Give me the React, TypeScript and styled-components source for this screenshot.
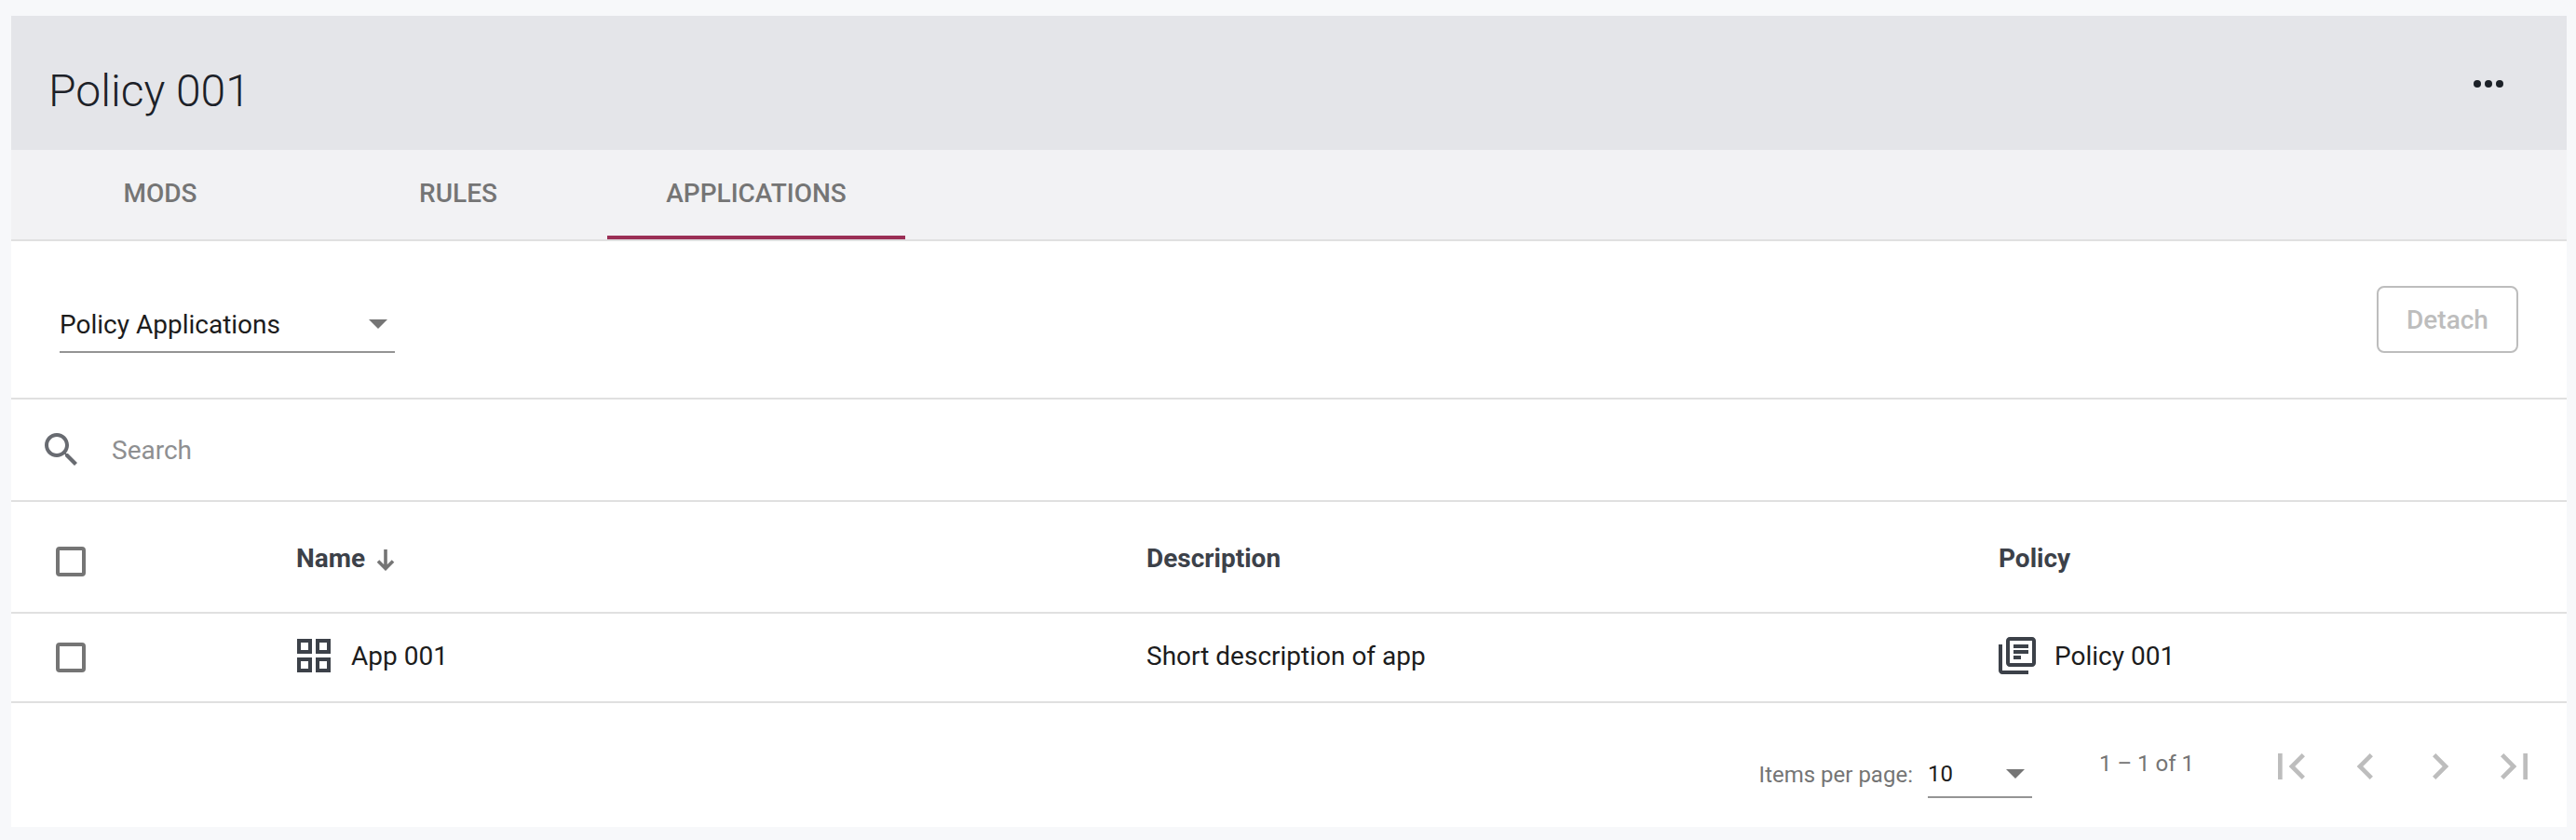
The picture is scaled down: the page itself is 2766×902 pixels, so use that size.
import { createGlobalStyle } from 'styled-components';
import styled from 'styled-components';

const GlobalStyle = createGlobalStyle`
  html, body {
    margin: 0;
    padding: 0;
    background: #f7f8fa;
    font-family: Roboto, "Liberation Sans", sans-serif;
  }
  * {
    box-sizing: border-box;
  }
`;

const Page = styled.div`
  padding: 17px 10px 14px 12px;
`;
const Panel = styled.main`
  background: #fff;
`;
const Header = styled.header`
  height: 144px;
  background: #e4e5e9;
  display: flex;
  align-items: center;
  justify-content: space-between;
  padding: 0 68px 0 40px;
`;
const Title = styled.h1`
  margin: 16px 0 0;
  font-size: 48px;
  font-weight: 300;
  color: #1c2128;
`;
const Dots = styled.div`
  display: flex;
  gap: 4px;
  margin-top: 2px;
  span {
    width: 8px;
    height: 8px;
    border-radius: 50%;
    background: #1c2128;
  }
`;
const Tabs = styled.nav`
  height: 98px;
  display: flex;
  background: #f2f2f4;
  border-bottom: 2px solid #e0e0e0;
`;
const Tab = styled.div<{ $active?: boolean }>`
  width: 320px;
  height: 96px;
  display: flex;
  align-items: center;
  justify-content: center;
  font-size: 28px;
  font-weight: 500;
  color: #757575;
  border-bottom: 4px solid ${(p) => (p.$active ? '#9b2f56' : 'transparent')};
`;
const Toolbar = styled.div`
  height: 170px;
  display: flex;
  justify-content: space-between;
  align-items: flex-start;
  padding: 48px 52px 0 52px;
  border-bottom: 2px solid #e0e0e0;
`;
const Select = styled.div<{ $width: number; $size: number; $height: number }>`
  width: ${(p) => p.$width}px;
  height: ${(p) => p.$height}px;
  display: flex;
  align-items: center;
  justify-content: space-between;
  padding-right: 8px;
  border-bottom: 2px solid #949494;
  font-size: ${(p) => p.$size}px;
  color: #1c1c1c;
`;
const PolicySelect = styled(Select)`
  margin-top: 12px;
`;
const Caret = styled.span`
  width: 0;
  height: 0;
  border-left: 10px solid transparent;
  border-right: 10px solid transparent;
  border-top: 10px solid #757575;
`;
const DetachButton = styled.button`
  width: 152px;
  height: 72px;
  background: #fff;
  border: 2px solid #bdbdbd;
  border-radius: 8px;
  font-family: inherit;
  font-size: 28px;
  font-weight: 500;
  color: #bdbdbd;
`;
const SearchRow = styled.div`
  height: 110px;
  display: flex;
  align-items: center;
  gap: 30px;
  padding-left: 30px;
  border-bottom: 2px solid #e0e0e0;
  font-size: 28px;
  color: #8e8f91;
`;
const TableRow = styled.div<{ $height: number }>`
  height: ${(p) => p.$height}px;
  display: grid;
  grid-template-columns: 306px 913px 915px 1fr;
  align-items: center;
  border-bottom: 2px solid #e0e0e0;
`;
const CheckCell = styled.div<{ $offset?: number }>`
  padding-left: 48px;
  margin-top: ${(p) => p.$offset ?? 0}px;
  display: flex;
`;
const Checkbox = styled.span`
  width: 32px;
  height: 32px;
  border: 4px solid #757575;
  border-radius: 4px;
`;
const HeadCell = styled.div`
  display: flex;
  align-items: center;
  gap: 12px;
  padding-top: 2px;
  font-size: 28px;
  font-weight: 700;
  color: #3c4149;
`;
const SortArrow = styled.svg`
  display: block;
  margin-top: 4px;
`;
const Cell = styled.div`
  display: flex;
  align-items: center;
  gap: 16px;
  padding-bottom: 4px;
  font-size: 28px;
  color: #1c1c1c;
`;
const CellIcon = styled.span<{ $shift: number }>`
  display: flex;
  margin-left: -${(p) => p.$shift}px;
`;
const Footer = styled.footer`
  height: 133px;
  display: flex;
  align-items: center;
  justify-content: flex-end;
  padding-right: 28px;
`;
const PageLabel = styled.span`
  font-size: 24px;
  color: #757575;
  margin-right: 16px;
`;
const PerPage = styled.div`
  margin-top: 20px;
  display: flex;
  align-items: center;
`;
const Range = styled.span`
  font-size: 24px;
  color: #757575;
  margin: 0 76px 3px 72px;
`;
const Pager = styled.div`
  display: flex;
  gap: 24px;
  margin-top: 3px;
  svg {
    display: block;
  }
`;

const Icon = ({ d, size, color }: { d: string; size: number; color: string }) => (
  <svg width={size} height={size} viewBox="0 0 24 24" fill={color}>
    <path d={d} />
  </svg>
);

const SEARCH =
  'M15.5 14h-.79l-.28-.27C15.41 12.59 16 11.11 16 9.5 16 5.91 13.09 3 9.5 3S3 5.91 3 9.5 5.91 16 9.5 16c1.61 0 3.09-.59 4.23-1.57l.27.28v.79l5 4.99L20.49 19l-4.99-5zm-6 0C7.01 14 5 11.99 5 9.5S7.01 5 9.5 5 14 7.01 14 9.5 11.99 14 9.5 14z';
const APP_GRID =
  'M3 3h8v8H3V3zm2 2v4h4V5H5zm8-2h8v8h-8V3zm2 2v4h4V5h-4zM3 13h8v8H3v-8zm2 2v4h4v-4H5zm8-2h8v8h-8v-8zm2 2v4h4v-4h-4z';
const LIBRARY =
  'M4 6H2v14c0 1.1.9 2 2 2h14v-2H4V6zm16-4H8c-1.1 0-2 .9-2 2v12c0 1.1.9 2 2 2h12c1.1 0 2-.9 2-2V4c0-1.1-.9-2-2-2zm0 14H8V4h12v12zM10 9h8v2h-8zm0 3h4v2h-4zm0-6h8v2h-8z';
const FIRST = 'M18.41 16.59L13.82 12l4.59-4.59L17 6l-6 6 6 6zM6 6h2v12H6z';
const PREV = 'M15.41 7.41L14 6l-6 6 6 6 1.41-1.41L10.83 12z';
const NEXT = 'M8.59 16.59L10 18l6-6-6-6-1.41 1.41L13.17 12z';
const LAST = 'M5.59 7.41L10.18 12l-4.59 4.59L7 18l6-6-6-6zM16 6h2v12h-2z';

export default function App() {
  return (
    <Page>
      <GlobalStyle />
      <Panel>
        <Header>
          <Title>Policy 001</Title>
          <Dots>
            <span />
            <span />
            <span />
          </Dots>
        </Header>
        <Tabs>
          <Tab>MODS</Tab>
          <Tab>RULES</Tab>
          <Tab $active>APPLICATIONS</Tab>
        </Tabs>
        <Toolbar>
          <PolicySelect $width={360} $size={28} $height={60}>
            Policy Applications
            <Caret />
          </PolicySelect>
          <DetachButton>Detach</DetachButton>
        </Toolbar>
        <SearchRow>
          <Icon d={SEARCH} size={48} color="#686b71" />
          Search
        </SearchRow>
        <TableRow $height={120}>
          <CheckCell $offset={10}>
            <Checkbox />
          </CheckCell>
          <HeadCell>
            Name
            <SortArrow width="20" height="23" viewBox="0 0 20 23" fill="none" stroke="#757575" strokeWidth="3.6">
              <path d="M10 0v20M2 12.5l8 8 8-8" />
            </SortArrow>
          </HeadCell>
          <HeadCell>Description</HeadCell>
          <HeadCell>Policy</HeadCell>
        </TableRow>
        <TableRow $height={96}>
          <CheckCell>
            <Checkbox />
          </CheckCell>
          <Cell>
            <CellIcon $shift={5}>
              <Icon d={APP_GRID} size={48} color="#3c4149" />
            </CellIcon>
            App 001
          </Cell>
          <Cell>Short description of app</Cell>
          <Cell>
            <CellIcon $shift={4}>
              <Icon d={LIBRARY} size={48} color="#3c4149" />
            </CellIcon>
            Policy 001
          </Cell>
        </TableRow>
        <Footer>
          <PerPage>
            <PageLabel>Items per page:</PageLabel>
            <Select $width={112} $size={24} $height={50}>
              10
              <Caret />
            </Select>
          </PerPage>
          <Range>1 – 1 of 1</Range>
          <Pager>
            <Icon d={FIRST} size={56} color="#bdbdbd" />
            <Icon d={PREV} size={56} color="#bdbdbd" />
            <Icon d={NEXT} size={56} color="#bdbdbd" />
            <Icon d={LAST} size={56} color="#bdbdbd" />
          </Pager>
        </Footer>
      </Panel>
    </Page>
  );
}
